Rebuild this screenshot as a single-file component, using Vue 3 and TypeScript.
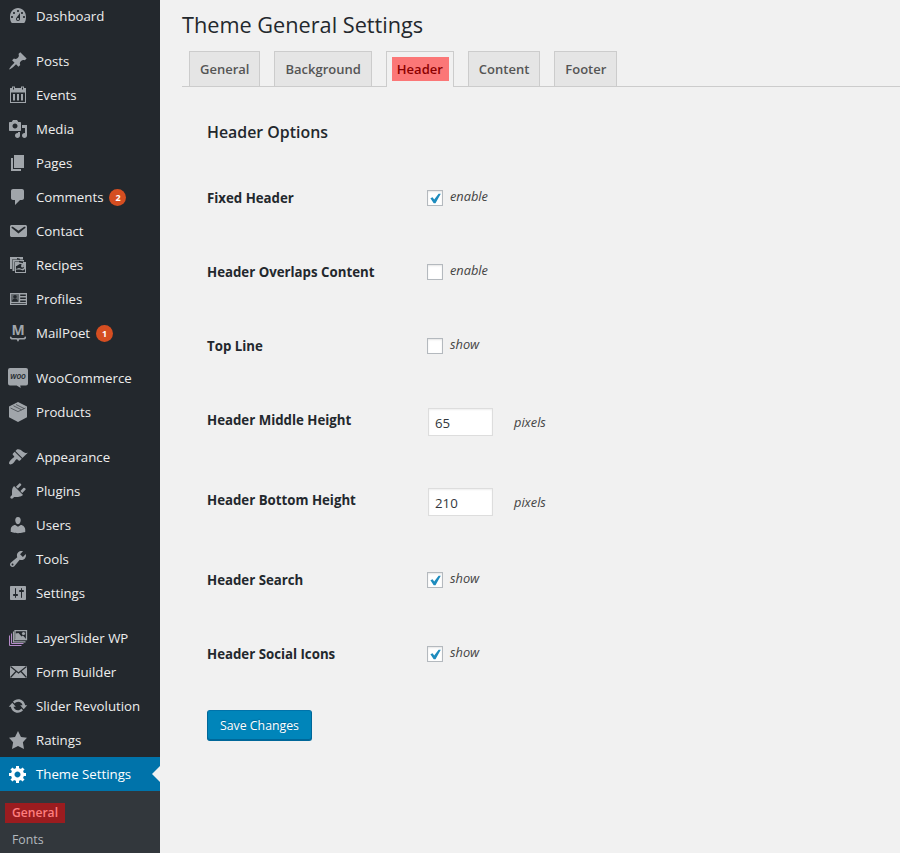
<script setup lang="ts">
import { reactive } from 'vue'

interface MenuItem {
  label: string
  icon: string
  badge?: number
  active?: boolean
}
interface Option {
  label: string
  note: string
  checked?: boolean
  value?: string
}

const icons: Record<string, string> = {
  dashboard:
    'M3.76 17h12.48c1.34-1.63 1.76-3.72 1.76-6 0-5.52-3.58-9-8-9s-8 3.48-8 9c0 2.28.42 4.37 1.76 6zM10 4c.55 0 1 .45 1 1s-.45 1-1 1-1-.45-1-1 .45-1 1-1zM6 6c.55 0 1 .45 1 1s-.45 1-1 1-1-.45-1-1 .45-1 1-1zm8 0c.55 0 1 .45 1 1s-.45 1-1 1-1-.45-1-1 .45-1 1-1zm-5.37 5.55L12 7v6c0 1.1-.9 2-2 2s-2-.9-2-2c0-.57.24-1.08.63-1.45zM4 10c.55 0 1 .45 1 1s-.45 1-1 1-1-.45-1-1 .45-1 1-1zm12 0c.55 0 1 .45 1 1s-.45 1-1 1-1-.45-1-1 .45-1 1-1zm-5 3c0-.55-.45-1-1-1s-1 .45-1 1 .45 1 1 1 1-.45 1-1z',
  posts:
    'M10.44 3.02l1.82-1.82 6.36 6.35-1.83 1.82c-1.05-.68-2.48-.57-3.41.36l-.75.75c-.92.93-1.04 2.35-.35 3.41l-1.83 1.82-2.41-2.41-2.8 2.79c-.42.42-3.38 2.71-3.8 2.29s1.86-3.39 2.28-3.81l2.79-2.79L4.1 9.36l1.83-1.82c1.05.69 2.48.57 3.4-.36l.75-.75c.93-.92 1.05-2.35.36-3.41z',
  media:
    'M13 11V4c0-.55-.45-1-1-1h-1.67L9 1H5L3.67 3H2c-.55 0-1 .45-1 1v7c0 .55.45 1 1 1h10c.55 0 1-.45 1-1zM7 4.5c1.38 0 2.5 1.12 2.5 2.5S8.38 9.5 7 9.5 4.5 8.38 4.5 7 5.62 4.5 7 4.5zM14 6h5v10.5c0 1.38-1.12 2.5-2.5 2.5S14 17.88 14 16.5s1.12-2.5 2.5-2.5c.17 0 .34.02.5.05V9h-3V6zm-4 8.05V13h2v3.5c0 1.38-1.12 2.5-2.5 2.5S7 17.88 7 16.5 8.12 14 9.5 14c.17 0 .34.02.5.05z',
  pages: 'M6 15V2h10v13H6zm-1 1h8v2H3V5h2v11z',
  comments: 'M5 2h9c1.1 0 2 .9 2 2v7c0 1.1-.9 2-2 2h-2l-5 5v-5H5c-1.1 0-2-.9-2-2V4c0-1.1.9-2 2-2z',
  contact:
    'M3.87 4h13.25C18.37 4 19 4.59 19 5.79v8.42c0 1.19-.63 1.79-1.88 1.79H3.87c-1.25 0-1.88-.6-1.88-1.79V5.79c0-1.2.63-1.79 1.88-1.79zm6.62 8.6l6.74-5.53c.24-.2.43-.66.13-1.07-.29-.41-.82-.42-1.17-.17l-5.7 3.86L4.8 5.83c-.35-.25-.88-.24-1.17.17-.3.41-.11.87.13 1.07z',
  appearance:
    'M14.48 11.06L7.41 3.99l1.5-1.5c.5-.56 2.3-.47 3.51.32 1.21.8 1.43 1.28 2.91 2.1 1.18.64 2.45 1.26 4.45.85zm-.71.71L6.7 4.7 4.93 6.47c-.39.39-.39 1.02 0 1.41l1.06 1.06c.39.39.39 1.03 0 1.42-.6.6-1.43 1.11-2.21 1.69-.35.26-.7.53-1.01.84C1.43 14.23.4 16.08 1.4 17.07c.99 1 2.84-.03 4.18-1.36.31-.31.58-.66.85-1.02.57-.78 1.08-1.61 1.69-2.21.39-.39 1.02-.39 1.41 0l1.06 1.06c.39.39 1.02.39 1.41 0z',
  plugins:
    'M13.11 4.36L9.87 7.6 8 5.73l3.24-3.24c.35-.34 1.05-.2 1.56.32.52.51.66 1.21.31 1.55zm-8 1.77l.91-1.12 9.01 9.01-1.19.84c-.71.71-2.63 1.16-3.82 1.16H6.14L4.9 17.26c-.59.59-1.54.59-2.12 0-.59-.58-.59-1.53 0-2.12l1.24-1.24v-3.88c0-1.13.4-3.19 1.09-3.89zm7.26 3.97l3.24-3.24c.34-.35 1.04-.21 1.55.31.52.51.66 1.21.31 1.55l-3.24 3.25z',
  users:
    'M10 9.25c-2.27 0-2.73-3.44-2.73-3.44C7 4.02 7.82 2 9.97 2c2.16 0 2.98 2.02 2.71 3.81 0 0-.41 3.44-2.68 3.44zm0 2.57L12.72 10c2.39 0 4.52 2.33 4.52 4.53v2.49s-3.65 1.13-7.24 1.13c-3.65 0-7.24-1.13-7.24-1.13v-2.49c0-2.25 1.94-4.48 4.47-4.48z',
  tools:
    'M16.68 9.77c-1.34 1.34-3.3 1.67-4.95.99l-5.41 6.52c-.99.99-2.59.99-3.58 0s-.99-2.59 0-3.57l6.52-5.42c-.68-1.65-.35-3.61.99-4.95 1.28-1.28 3.12-1.62 4.72-1.06l-2.89 2.89 2.82 2.82 2.86-2.87c.53 1.58.18 3.39-1.08 4.65zM3.81 16.21c.4.39 1.04.39 1.43 0 .4-.4.4-1.04 0-1.43-.39-.4-1.03-.4-1.43 0-.39.39-.39 1.03 0 1.43z',
  settings:
    'M18 16V4c0-.55-.45-1-1-1H3c-.55 0-1 .45-1 1v12c0 .55.45 1 1 1h14c.55 0 1-.45 1-1zM8 11h1c.55 0 1 .45 1 1s-.45 1-1 1H8v1.5c0 .28-.22.5-.5.5s-.5-.22-.5-.5V13H6c-.55 0-1-.45-1-1s.45-1 1-1h1V5.5c0-.28.22-.5.5-.5s.5.22.5.5V11zm5-2h-1c-.55 0-1-.45-1-1s.45-1 1-1h1V5.5c0-.28.22-.5.5-.5s.5.22.5.5V7h1c.55 0 1 .45 1 1s-.45 1-1 1h-1v5.5c0 .28-.22.5-.5.5s-.5-.22-.5-.5V9z',
  revolution:
    'M10.2 3.28c3.53 0 6.43 2.61 6.92 6h2.08l-3.5 4-3.5-4h2.32c-.45-1.97-2.21-3.45-4.32-3.45-1.45 0-2.73.71-3.54 1.78L4.95 5.66C6.23 4.2 8.11 3.28 10.2 3.28zm-.4 13.44c-3.52 0-6.43-2.61-6.92-6H.8l3.5-4c1.17 1.33 2.33 2.67 3.5 4H5.48c.45 1.97 2.21 3.45 4.32 3.45 1.45 0 2.73-.71 3.54-1.78l1.71 1.95c-1.28 1.46-3.15 2.38-5.25 2.38z',
  ratings: 'M10 1l3 6 6 .75-4.12 4.62L16 19l-6-3-6 3 1.13-6.63L1 7.75 7 7z',
  theme:
    'M18 12h-2.18c-.17.7-.44 1.35-.81 1.93l1.54 1.54-2.1 2.1-1.54-1.54c-.58.36-1.23.63-1.91.79V19H8v-2.18c-.68-.16-1.33-.43-1.91-.79l-1.54 1.54-2.12-2.12 1.54-1.54c-.36-.58-.63-1.23-.79-1.91H1V9.03h2.17c.16-.7.44-1.35.8-1.94L2.43 5.55l2.1-2.1 1.54 1.54c.58-.37 1.24-.64 1.93-.81V2h3v2.18c.68.16 1.33.43 1.91.79l1.54-1.54 2.12 2.12-1.54 1.54c.36.59.64 1.24.8 1.94H18V12zm-8.5 1.5c1.66 0 3-1.34 3-3s-1.34-3-3-3-3 1.34-3 3 1.34 3 3 3z',
}

const groups: MenuItem[][] = [
  [{ label: 'Dashboard', icon: 'dashboard' }],
  [
    { label: 'Posts', icon: 'posts' },
    { label: 'Events', icon: 'calendar' },
    { label: 'Media', icon: 'media' },
    { label: 'Pages', icon: 'pages' },
    { label: 'Comments', icon: 'comments', badge: 2 },
    { label: 'Contact', icon: 'contact' },
    { label: 'Recipes', icon: 'recipes' },
    { label: 'Profiles', icon: 'profiles' },
    { label: 'MailPoet', icon: 'mailpoet', badge: 1 },
  ],
  [
    { label: 'WooCommerce', icon: 'woo' },
    { label: 'Products', icon: 'products' },
  ],
  [
    { label: 'Appearance', icon: 'appearance' },
    { label: 'Plugins', icon: 'plugins' },
    { label: 'Users', icon: 'users' },
    { label: 'Tools', icon: 'tools' },
    { label: 'Settings', icon: 'settings' },
  ],
  [
    { label: 'LayerSlider WP', icon: 'layers' },
    { label: 'Form Builder', icon: 'form' },
    { label: 'Slider Revolution', icon: 'revolution' },
    { label: 'Ratings', icon: 'ratings' },
    { label: 'Theme Settings', icon: 'theme', active: true },
  ],
]

const tabs = ['General', 'Background', 'Header', 'Content', 'Footer']

const options = reactive<Option[]>([
  { label: 'Fixed Header', note: 'enable', checked: true },
  { label: 'Header Overlaps Content', note: 'enable', checked: false },
  { label: 'Top Line', note: 'show', checked: false },
  { label: 'Header Middle Height', note: 'pixels', value: '65' },
  { label: 'Header Bottom Height', note: 'pixels', value: '210' },
  { label: 'Header Search', note: 'show', checked: true },
  { label: 'Header Social Icons', note: 'show', checked: true },
])
</script>

<template>
  <div class="admin">
    <aside class="sidebar">
      <nav>
        <ul v-for="(group, g) in groups" :key="g" class="group">
          <li v-for="item in group" :key="item.label" class="item" :class="{ active: item.active }">
            <svg class="icon" viewBox="0 0 20 20" width="20" height="20" fill="currentColor" aria-hidden="true">
              <g v-if="item.icon === 'calendar'">
                <path fill-rule="evenodd" d="M2 3h16v15H2zM3 7.500V17h14V7.500z" />
                <path d="M4 1.500h3v3H4zM13 1.500h3v3h-3zM5 9h2v6.500H5zM9 9h2v6.500H9zM13 9h2v6.500h-2z" />
                <path class="cut" d="M5 2.500h1v2H5zM14 2.500h1v2h-1z" />
              </g>
              <g v-else-if="item.icon === 'recipes'">
                <path d="M2 2h13v2.500H4V14H2zM4.500 5H16v1.500H6.500V16h-2z" />
                <path fill-rule="evenodd" d="M7 7h11v11H7zm1 7.500V17h9v-3l-2 1.500-3-1z" />
                <path class="cut" d="M8 11c2 0 2-2 5-2l1 1h2v3l-2 1-3-1-3 1zM9 3l3 .7v1L9 4.500zM11 5.700l4 1v1.500l-4-1z" />
                <circle cx="14.500" cy="11" r="1.500" />
              </g>
              <g v-else-if="item.icon === 'profiles'">
                <path fill-rule="evenodd" d="M2 4h17v12H2zm1.200 1.200v7.600h7.600V5.200zm9 .3V7h5.600V5.500zm0 3V10h5.600V8.500zm0 3V13h5.600v-1.500zM3.200 14v.8h14.600V14z" />
                <path d="M3.200 5.200h7.600v7.600H3.200z" opacity=".5" />
                <circle class="cut" cx="7" cy="7.700" r="1.800" />
                <path class="cut" d="M4 12.800c0-2 1.200-3.300 3-3.300s3 1.300 3 3.300z" />
              </g>
              <g v-else-if="item.icon === 'mailpoet'">
                <text x="10" y="12" text-anchor="middle" class="glyph-m">M</text>
                <path d="M2.700 14.200c0 1.300.7 1.600 2 1.600h3.500c.9 0 1.500.3 1.800 1 .3-.7.9-1 1.800-1h3.500c1.300 0 2-.3 2-1.600" fill="none" stroke="currentColor" stroke-width="1.600" stroke-linecap="round" />
                <path d="M8.800 16.300h2.400L10 18.700z" />
              </g>
              <g v-else-if="item.icon === 'woo'">
                <path d="M2 0h16a2 2 0 0 1 2 2v13.500a2 2 0 0 1-2 2h-5.800l.5 2.500-4-2.500H2a2 2 0 0 1-2-2V2a2 2 0 0 1 2-2z" />
                <text x="10" y="11.300" text-anchor="middle" class="glyph-woo">woo</text>
              </g>
              <g v-else-if="item.icon === 'products'">
                <path d="M10 0l9 4.600v10.600L10 20l-9-4.800V4.600z" />
                <path class="line" d="M2.500 6L10 9.600l7.500-3.600M5.500 3.800l8 4M8 2.500l8 4" />
              </g>
              <g v-else-if="item.icon === 'layers'" fill="none" stroke="currentColor">
                <path class="tint" d="M1.500 7.500v10h12M3.500 5.500v10h12" />
                <path stroke-width="1.200" d="M5.500 3.500v10.300h12" />
                <path stroke-width="1.300" d="M7 2.700h11.500v9H7z" />
                <path fill="currentColor" stroke="none" d="M7.500 5.500l3-.5 3 3.500 1.500-1 3 3.500h-10.500z" />
                <circle cx="15.500" cy="5.500" r="1.600" fill="currentColor" stroke="none" />
              </g>
              <g v-else-if="item.icon === 'form'">
                <path d="M2 4h17v12H2z" />
                <path class="line bold" d="M2.500 4.500l8 6.500 8-6.500M2.500 15.500l5.500-6M18.500 15.500l-5.500-6" />
              </g>
              <path v-else fill-rule="evenodd" :d="icons[item.icon]" />
            </svg>
            <span class="label">{{ item.label }}</span>
            <span v-if="item.badge" class="badge">{{ item.badge }}</span>
          </li>
        </ul>
      </nav>
      <ul class="submenu">
        <li><span class="current">General</span></li>
        <li><span>Fonts</span></li>
      </ul>
    </aside>

    <main class="content">
      <h1>Theme General Settings</h1>
      <div class="tabs">
        <a v-for="tab in tabs" :key="tab" class="tab" :class="{ selected: tab === 'Header' }"><span>{{ tab }}</span></a>
      </div>
      <form class="panel" @submit.prevent>
        <h2>Header Options</h2>
        <div v-for="opt in options" :key="opt.label" class="row" :class="{ tall: opt.value !== undefined }">
          <span class="name">{{ opt.label }}</span>
          <template v-if="opt.value !== undefined">
            <input v-model="opt.value" class="number" type="text" />
            <em class="unit">{{ opt.note }}</em>
          </template>
          <label v-else class="choice">
            <input v-model="opt.checked" class="check" type="checkbox" />
            <span class="box">
              <svg v-if="opt.checked" viewBox="0 0 14 14" width="14" height="14"><path d="M2.400 7.300l2.200-1 1.600 2.200 4.400-5.700h2.200L7.500 12.200H5.700z" fill="#1e8cbe" /></svg>
            </span>
            <em>{{ opt.note }}</em>
          </label>
        </div>
        <button class="save" type="submit">Save Changes</button>
      </form>
    </main>
  </div>
</template>

<style>
body {
  margin: 0;
  background: #f1f1f1;
}
</style>

<style scoped>
.admin {
  display: flex;
  height: 853px;
  overflow: hidden;
  background: #f1f1f1;
  color: #23282d;
  font-family: 'Open Sans', 'Noto Sans', sans-serif;
  font-size: 13.25px;
}
ul {
  list-style: none;
  margin: 0;
  padding: 0;
}
.sidebar {
  display: flex;
  flex-direction: column;
  flex: 0 0 160px;
  background: #23282d;
}
nav {
  margin-top: -1px;
}
.group + .group {
  margin-top: 11px;
}
.item {
  position: relative;
  display: flex;
  align-items: center;
  height: 34px;
  padding-left: 8px;
  color: #eee;
  white-space: nowrap;
}
.icon {
  flex: none;
  margin-right: 8px;
  overflow: visible;
  color: #a0a5aa;
}
.active {
  background: #0073aa;
  color: #fff;
}
.active .icon {
  color: #fff;
}
.active::after {
  content: '';
  position: absolute;
  right: 0;
  top: 9px;
  border: 8px solid transparent;
  border-left-width: 0;
  border-right-color: #f1f1f1;
}
.cut {
  fill: #23282d;
}
.line {
  fill: none;
  stroke: #23282d;
  stroke-width: 0.6;
}
.line.bold {
  stroke-width: 1.2;
}
.tint {
  stroke: #b58bc9;
}
.glyph-m {
  font: 700 14px/1 'Open Sans', sans-serif;
}
.glyph-woo {
  font: italic 600 8.5px/1 'Open Sans', sans-serif;
  letter-spacing: -0.3px;
  fill: #23282d;
}
.badge {
  width: 17px;
  height: 17px;
  margin-left: 6px;
  border-radius: 50%;
  background: #d54e21;
  color: #fff;
  font-size: 9px;
  font-weight: 700;
  line-height: 17px;
  text-align: center;
}
.submenu {
  flex: 1;
  padding-top: 8px;
  background: #32373c;
  color: #b4b9be;
  font-size: 12.3px;
}
.submenu li {
  display: flex;
  align-items: center;
  height: 27px;
  padding-left: 5px;
}
.submenu span {
  padding: 0 7px;
  line-height: 20px;
}
.submenu .current {
  background: #9b1c1f;
  color: #ff7f7f;
  font-size: 12.1px;
  font-weight: 600;
}
.content {
  flex: 1;
  min-width: 0;
}
h1 {
  height: 51px;
  margin: 0;
  padding-left: 22px;
  font-size: 21.7px;
  font-weight: 400;
  line-height: 49px;
}
.tabs {
  display: flex;
  gap: 14px;
  height: 35px;
  margin-left: 22px;
  padding-left: 7px;
  border-bottom: 1px solid #ccc;
}
.tab {
  box-sizing: border-box;
  height: 35px;
  padding: 5px;
  border: 1px solid #ccc;
  border-bottom: 0;
  background: #e5e5e5;
  color: #555;
  font-size: 13px;
  font-weight: 600;
  line-height: 24px;
}
.tab span {
  display: block;
  padding: 0 5px;
}
.tab.selected {
  height: 36px;
  padding: 5px 4px 5px 5px;
  background: #f1f1f1;
}
.selected span {
  padding: 0 6px 0 5px;
  background: #fb7777;
  color: #8b0000;
}
.panel {
  padding: 33px 0 0 47px;
}
h2 {
  height: 24px;
  margin: 0 0 37px;
  font-size: 15.9px;
  font-weight: 600;
  line-height: 24px;
}
.row {
  display: flex;
  align-items: flex-start;
  height: 74px;
}
.row.tall {
  height: 80px;
}
.name {
  width: 220px;
  font-weight: 700;
  line-height: 34px;
}
.choice {
  display: flex;
  gap: 7px;
}
.check {
  position: absolute;
  opacity: 0;
}
.box {
  box-sizing: border-box;
  width: 16px;
  height: 16px;
  margin-top: 9px;
  border: 1px solid #b4b9be;
  background: #fff;
  box-shadow: inset 0 1px 2px rgba(0, 0, 0, 0.1);
}
.box svg {
  display: block;
}
em {
  color: #444;
  font-size: 12.8px;
  line-height: 30px;
}
.number {
  box-sizing: border-box;
  width: 65px;
  height: 28px;
  margin: 5px 0 0 1px;
  padding: 1px 6px 0;
  border: 1px solid #ddd;
  border-radius: 0;
  background: #fff;
  box-shadow: inset 0 1px 2px rgba(0, 0, 0, 0.07);
  color: #32373c;
  font: inherit;
}
.unit {
  margin-left: 21px;
  line-height: 38px;
}
.save {
  display: block;
  box-sizing: border-box;
  width: 105px;
  height: 31px;
  margin-top: -1px;
  padding: 0;
  border: 1px solid #006799;
  border-top-color: #0073aa;
  border-radius: 3px;
  background: #0085ba;
  box-shadow: inset 0 -1px 0 #006799;
  color: #fff;
  font: inherit;
  font-size: 12.3px;
  text-shadow: 0 -1px 1px #006799;
}
</style>
